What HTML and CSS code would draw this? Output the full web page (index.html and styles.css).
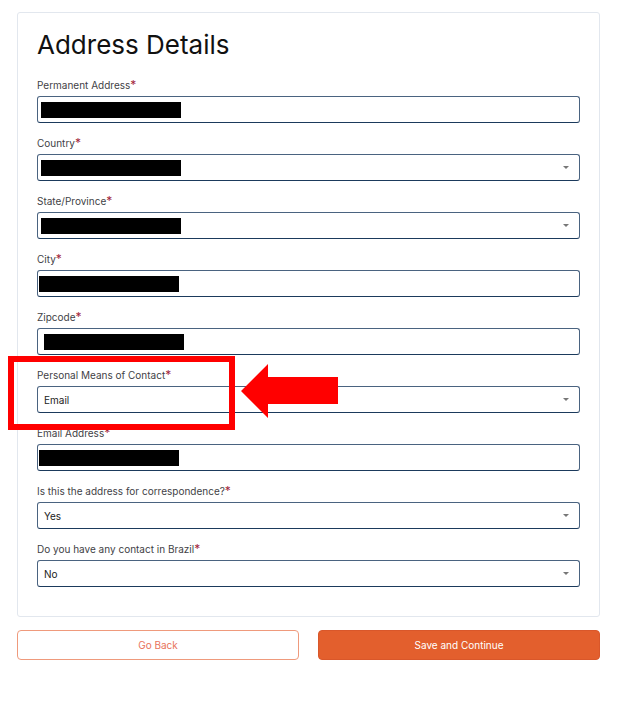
FILE: index.html
```html
<!DOCTYPE html>
<html lang="en">
<head>
    <meta charset="UTF-8">
    <meta name="viewport" content="width=device-width, initial-scale=1.0">
    <title>Address Details</title>
    <link rel="stylesheet" href="styles.css">
</head>
<body>
<div class="page">
    <div class="card">
        <h1 class="title">Address Details</h1>

        <div class="field">
            <div class="label">Permanent Address<span class="req">*</span></div>
            <div class="box"><span class="redact"></span></div>
        </div>
        <div class="field">
            <div class="label">Country<span class="req">*</span></div>
            <div class="box select"><span class="redact"></span><span class="caret"></span></div>
        </div>
        <div class="field">
            <div class="label">State/Province<span class="req">*</span></div>
            <div class="box select"><span class="redact"></span><span class="caret"></span></div>
        </div>
        <div class="field">
            <div class="label">City<span class="req">*</span></div>
            <div class="box"><span class="redact left"></span></div>
        </div>
        <div class="field">
            <div class="label">Zipcode<span class="req">*</span></div>
            <div class="box"><span class="redact right"></span></div>
        </div>
        <div class="field">
            <div class="label">Personal Means of Contact<span class="req">*</span></div>
            <div class="box select"><span class="value">Email</span><span class="caret"></span></div>
        </div>
        <div class="field">
            <div class="label">Email Address<span class="req">*</span></div>
            <div class="box"><span class="redact left"></span></div>
        </div>
        <div class="field">
            <div class="label">Is this the address for correspondence?<span class="req">*</span></div>
            <div class="box select"><span class="value">Yes</span><span class="caret"></span></div>
        </div>
        <div class="field">
            <div class="label">Do you have any contact in Brazil<span class="req">*</span></div>
            <div class="box select"><span class="value">No</span><span class="caret"></span></div>
        </div>
    </div>

    <div class="actions">
        <button class="btn back">Go Back</button>
        <button class="btn save">Save and Continue</button>
    </div>

    <!-- annotation drawn over the form -->
    <div class="mark"></div>
    <svg class="arrow" width="100" height="56" viewBox="240 363 100 56">
        <polygon points="241,391 268,364 268,377 338,377 338,404 268,404 268,418" fill="#ff0000"/>
    </svg>
</div>
</body>
</html>
```

FILE: styles.css
```css
body{
    margin:0;
    padding:0;
    background:#ffffff;
    font-family: Inter, "Open Sans", sans-serif;
}
.page{
    position: relative;
    width:623px;
    height:689px;
    padding-top:12px;
}
.card{
    box-sizing: border-box;
    width:583px;
    margin:0 0 0 17px;
    padding:15px 19px 16px 19px;
    border:1px solid #e2e7ee;
    border-radius: 3px;
}
.title{
    margin:0 0 16px 0;
    font-size:26px;
    line-height:34px;
    font-weight:400;
    color:#111111;
}
.field{
    margin-bottom:13px;
}
.label{
    font-size:10px;
    line-height:14px;
    color:#3f3f46;
    margin-bottom:4px;
}
.req{
    color:#a3263b;
    font-size:12px;
    line-height:10px;
}
.box{
    box-sizing: border-box;
    position: relative;
    height:27px;
    display:flex;
    align-items:center;
    padding:0 6px;
    border:1px solid #4a6380;
    border-bottom-color:#1b3a5c;
    border-radius:3px;
    background:#ffffff;
}
.value{
    font-size:10px;
    color:#222222;
}
.redact{
    display:inline-block;
    width:140px;
    height:16px;
    background:#000000;
    margin-left:-3px;
}
.redact.left{
    margin-left:-5px;
}
.redact.right{
    margin-left:0;
}
.caret{
    position:absolute;
    right:10px;
    top:11px;
    width:0;
    height:0;
    border-left:3px solid transparent;
    border-right:3px solid transparent;
    border-top:3px solid #777777;
}
.actions{
    display:flex;
    gap:19px;
    margin:13px 0 0 17px;
    width:583px;
}
.btn{
    flex:1;
    height:30px;
    border-radius:4px;
    font-family: Inter, "Open Sans", sans-serif;
    font-size:10px;
    cursor:pointer;
}
.back{
    background:#ffffff;
    border:1px solid #ef9a7c;
    color:#e8735a;
}
.save{
    background:#e35f2d;
    border:1px solid #d9572a;
    color:#ffffff;
}
.mark{
    position:absolute;
    left:8px;
    top:356px;
    width:227px;
    height:74px;
    box-sizing:border-box;
    border:6px solid #ff0000;
}
.arrow{
    position:absolute;
    left:240px;
    top:363px;
}
```
